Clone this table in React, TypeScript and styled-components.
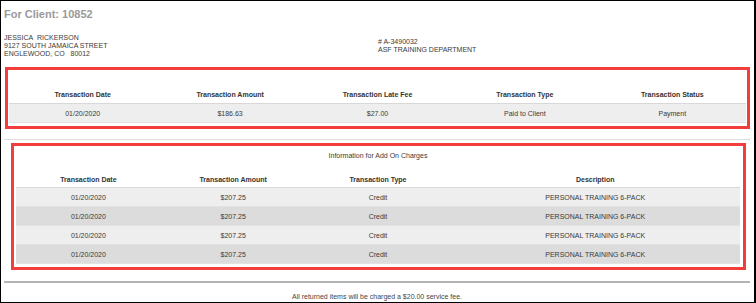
import React from "react";
import styled, { createGlobalStyle } from "styled-components";

const GlobalStyle = createGlobalStyle`
  html, body {
    margin: 0;
    padding: 0;
    background: #ffffff;
  }
  body {
    font-family: "Liberation Sans", Arial, sans-serif;
    color: #333333;
  }
`;

const payment = {
  date: "01/20/2020",
  amount: "$186.63",
  lateFee: "$27.00",
  type: "Paid to Client",
  status: "Payment",
};

const addOns = [1, 2, 3, 4].map(() => ({
  date: "01/20/2020",
  amount: "$207.25",
  type: "Credit",
  description: "PERSONAL TRAINING 6-PACK",
}));

const App = () => {
  return (
    <>
      <GlobalStyle />
      <Page>
        <Title>For Client: 10852</Title>
        <InfoRow>
          <Address>
            <Line>JESSICA&nbsp; RICKERSON</Line>
            <Line>9127 SOUTH JAMAICA STREET</Line>
            <Line>ENGLEWOOD, CO &nbsp; 80012</Line>
          </Address>
          <Address>
            <Line># A-3490032</Line>
            <Line>ASF TRAINING DEPARTMENT</Line>
          </Address>
        </InfoRow>

        <Highlight mt={9} ml={1} mr={0} pl={1} pr={1}>
          <HeadRow cols="repeat(5, 1fr)" h={34} pb={4}>
            <HeadCell>Transaction Date</HeadCell>
            <HeadCell>Transaction Amount</HeadCell>
            <HeadCell>Transaction Late Fee</HeadCell>
            <HeadCell>Transaction Type</HeadCell>
            <HeadCell>Transaction Status</HeadCell>
          </HeadRow>
          <DataRow cols="repeat(5, 1fr)" shade="#eeeeee">
            <Cell>{payment.date}</Cell>
            <Cell>{payment.amount}</Cell>
            <Cell>{payment.lateFee}</Cell>
            <Cell>{payment.type}</Cell>
            <Cell>{payment.status}</Cell>
          </DataRow>
        </Highlight>

        <Rule color="#dddddd" top={10} bottom={3} />

        <Highlight mt={0} ml={7} mr={4} pl={2} pr={3}>
          <Caption>Information for Add On Charges</Caption>
          <HeadRow cols="1fr 1fr 1fr 2fr" h={28} pb={3}>
            <HeadCell>Transaction Date</HeadCell>
            <HeadCell>Transaction Amount</HeadCell>
            <HeadCell>Transaction Type</HeadCell>
            <HeadCell>Description</HeadCell>
          </HeadRow>
          {addOns.map((row, i) => (
            <DataRow
              key={i}
              cols="1fr 1fr 1fr 2fr"
              shade={i % 2 === 0 ? "#eeeeee" : "#dcdcdc"}
            >
              <Cell>{row.date}</Cell>
              <Cell>{row.amount}</Cell>
              <Cell>{row.type}</Cell>
              <Cell>{row.description}</Cell>
            </DataRow>
          ))}
        </Highlight>

        <Rule color="#b4b4b4" top={11} bottom={9} thick={2} />

        <Footer>All returned items will be charged a $20.00 service fee.</Footer>
      </Page>
    </>
  );
};

export default App;

const Page = styled.div`
  box-sizing: border-box;
  width: 756px;
  height: 303px;
  border: 1px solid #000000;
  border-right-width: 2px;
  padding: 6px 4px 0 3px;
  overflow: hidden;
  background: #ffffff;
`;

const Title = styled.div`
  font-size: 11px;
  line-height: 14px;
  font-weight: bold;
  color: #9a9a9a;
`;

const InfoRow = styled.div`
  display: grid;
  grid-template-columns: 374px 1fr;
  align-items: center;
  margin-top: 13px;
`;

const Address = styled.div`
  display: flex;
  flex-direction: column;
`;

const Line = styled.div`
  font-size: 7px;
  line-height: 8px;
  color: #3a3a3a;
  white-space: pre;
`;

const Highlight = styled.div<{ mt: number; ml: number; mr: number; pl: number; pr: number }>`
  margin: ${(p) => p.mt}px ${(p) => p.mr}px 0 ${(p) => p.ml}px;
  padding: 0 ${(p) => p.pr}px 3px ${(p) => p.pl}px;
  border: 3px solid #f23d3d;
  background: #ffffff;
`;

const HeadRow = styled.div<{ cols: string; h: number; pb: number }>`
  display: grid;
  grid-template-columns: ${(p) => p.cols};
  align-items: end;
  height: ${(p) => p.h}px;
  box-sizing: border-box;
  padding-bottom: ${(p) => p.pb}px;
  border-bottom: 1px solid #d8d8d8;
`;

const HeadCell = styled.div`
  font-size: 7px;
  line-height: 9px;
  font-weight: bold;
  color: #333333;
  text-align: center;
`;

const DataRow = styled.div<{ cols: string; shade: string }>`
  display: grid;
  grid-template-columns: ${(p) => p.cols};
  align-items: center;
  height: 19px;
  background: ${(p) => p.shade};
  box-sizing: border-box;
  border-bottom: 1px solid #e2e2e2;
`;

const Cell = styled.div`
  font-size: 7px;
  line-height: 9px;
  color: #3a3a3a;
  text-align: center;
`;

const Caption = styled.div`
  padding-top: 5px;
  font-size: 7px;
  line-height: 9px;
  color: #3a3a3a;
  text-align: center;
`;

const Rule = styled.div<{ color: string; top: number; bottom: number; thick?: number }>`
  height: ${(p) => p.thick || 1}px;
  background: ${(p) => p.color};
  margin: ${(p) => p.top}px 0 ${(p) => p.bottom}px;
`;

const Footer = styled.div`
  font-size: 7px;
  line-height: 9px;
  color: #444444;
  text-align: center;
`;
